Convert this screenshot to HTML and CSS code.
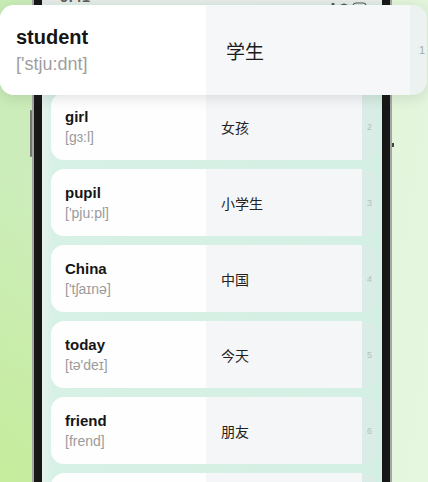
FILE: index.html
```html
<!DOCTYPE html>
<html lang="zh">
<head>
<meta charset="utf-8">
<title>Words</title>
<link rel="stylesheet" href="styles.css">
</head>
<body>
<div class="stage">
  <div class="phone">
    <div class="screen">
      <div class="status">
        <span class="time">9:41</span>
        <svg class="status-icons" width="50" height="12" viewBox="0 0 50 12">
          <rect x="0" y="8" width="3" height="4" rx="1" fill="#555"/>
          <rect x="4.5" y="6" width="3" height="6" rx="1" fill="#555"/>
          <rect x="9" y="4" width="3" height="8" rx="1" fill="#555"/>
          <rect x="13.5" y="2" width="3" height="10" rx="1" fill="#555"/>
          <path d="M21 5 Q26 0 31 5 L29.5 6.5 Q26 3 22.5 6.5 Z M24 8 Q26 6.5 28 8 L26 10.5 Z" fill="#555"/>
          <rect x="35" y="2" width="13" height="10" rx="3" fill="none" stroke="#555" stroke-width="1.2"/>
          <rect x="37" y="4" width="9" height="6" rx="1.5" fill="#555"/>
        </svg>
      </div>
      <div class="list">
        <div class="row">
          <div class="word-side"><span class="word">student</span><span class="ipa">['stju:dnt]</span></div>
          <div class="cn-side">学生</div>
          <div class="num">1</div>
        </div>
        <div class="row">
          <div class="word-side"><span class="word">girl</span><span class="ipa">[gɜ:l]</span></div>
          <div class="cn-side">女孩</div>
          <div class="num">2</div>
        </div>
        <div class="row">
          <div class="word-side"><span class="word">pupil</span><span class="ipa">['pju:pl]</span></div>
          <div class="cn-side">小学生</div>
          <div class="num">3</div>
        </div>
        <div class="row">
          <div class="word-side"><span class="word">China</span><span class="ipa">['tʃaɪnə]</span></div>
          <div class="cn-side">中国</div>
          <div class="num">4</div>
        </div>
        <div class="row">
          <div class="word-side"><span class="word">today</span><span class="ipa">[tə'deɪ]</span></div>
          <div class="cn-side">今天</div>
          <div class="num">5</div>
        </div>
        <div class="row">
          <div class="word-side"><span class="word">friend</span><span class="ipa">[frend]</span></div>
          <div class="cn-side">朋友</div>
          <div class="num">6</div>
        </div>
        <div class="row">
          <div class="word-side"><span class="word">teacher</span><span class="ipa">['ti:tʃə]</span></div>
          <div class="cn-side">老师</div>
          <div class="num">7</div>
        </div>
      </div>
    </div>
  </div>

  <div class="popup">
    <div class="word-side"><span class="word">student</span><span class="ipa">['stju:dnt]</span></div>
    <div class="cn-side">学生</div>
    <div class="num">1</div>
  </div>
</div>
</body>
</html>
```
FILE: styles.css
```css
html, body {
  margin: 0;
  padding: 0;
}
body {
  width: 428px;
  height: 482px;
  overflow: hidden;
  font-family: "Liberation Sans", "DejaVu Sans", "Noto Sans CJK SC", sans-serif;
  background:
    radial-gradient(ellipse 260px 300px at 0% 100%, rgba(196, 236, 150, 0.85), rgba(196, 236, 150, 0) 100%),
    linear-gradient(100deg, #c9ecb6 0%, #d3efc6 35%, #e1f5d9 70%, #e6f7e0 100%);
}
.stage {
  position: relative;
  display: flow-root;
  height: 482px;
  padding-left: 32px;
}
.phone {
  position: relative;
  box-sizing: border-box;
  width: 360px;
  margin-top: -80px;
  height: 620px;
  border: 2px solid #a3a7a4;
  border-radius: 58px;
  background: #171717;
  padding: 8px 8px 0 8px;
}
.phone::before {
  content: "";
  position: absolute;
  left: -4px;
  top: 188px;
  width: 2px;
  height: 47px;
  background: #70756f;
  border-radius: 1px;
}
.phone::after {
  content: "";
  position: absolute;
  right: -4px;
  top: 221px;
  width: 2px;
  height: 4px;
  background: #444;
}
.screen {
  height: 100%;
  border-radius: 48px 48px 0 0;
  overflow: hidden;
  background: linear-gradient(90deg, #e4f4ed 0px, #d8f1e6 10px, #d4efe3 100%);
}
.status {
  height: 74px;
  display: flex;
  align-items: flex-end;
  justify-content: space-between;
  padding: 0 14px 0 18px;
  background: #e6ebe8;
}
.time {
  font-size: 15px;
  line-height: 14px;
  font-weight: 700;
  color: #5a5e5c;
}
.status-icons {
  margin-bottom: -9px;
}
.list {
  display: flex;
  flex-direction: column;
  gap: 9px;
  padding: 13px 0 0 9px;
}
.row {
  display: flex;
  width: 326px;
  height: 67px;
  border-radius: 13px;
  background: #d9ece5;
}
.word-side {
  box-sizing: border-box;
  width: 155px;
  padding-left: 14px;
  background: #fefefe;
  border-radius: 13px 0 0 13px;
  display: flex;
  flex-direction: column;
  justify-content: center;
  gap: 3px;
}
.word {
  font-size: 15px;
  line-height: 18px;
  font-weight: 700;
  color: #151515;
}
.ipa {
  font-size: 14px;
  line-height: 17px;
  color: #9b9b9b;
}
.cn-side {
  box-sizing: border-box;
  width: 156px;
  padding-left: 15px;
  background: #f5f6f8;
  display: flex;
  align-items: center;
  font-family: "Noto Sans CJK SC", sans-serif;
  font-size: 14px;
  color: #222;
}
.num {
  flex: 1;
  display: flex;
  align-items: center;
  justify-content: center;
  font-size: 9px;
  color: #b3c3bc;
}

/* enlarged active card */
.popup {
  position: absolute;
  left: 0;
  top: 5px;
  width: 427px;
  height: 90px;
  display: flex;
  border-radius: 14px;
  overflow: hidden;
  background: #ecf2ef;
  box-shadow: 0 3px 14px rgba(40, 60, 50, 0.14);
}
.popup .word-side {
  width: 206px;
  padding-left: 16px;
  border-radius: 0;
  background: #ffffff;
  gap: 4px;
}
.popup .word {
  font-size: 20px;
  line-height: 24px;
}
.popup .ipa {
  font-size: 18px;
  line-height: 22px;
  color: #9e9e9e;
}
.popup .cn-side {
  width: 204px;
  padding-left: 20px;
  background: #f6f7f9;
  font-size: 19px;
  color: #1c1c1c;
}
.popup .num {
  justify-content: flex-end;
  padding-right: 2px;
  font-size: 11px;
  color: #a4aca8;
}
```
